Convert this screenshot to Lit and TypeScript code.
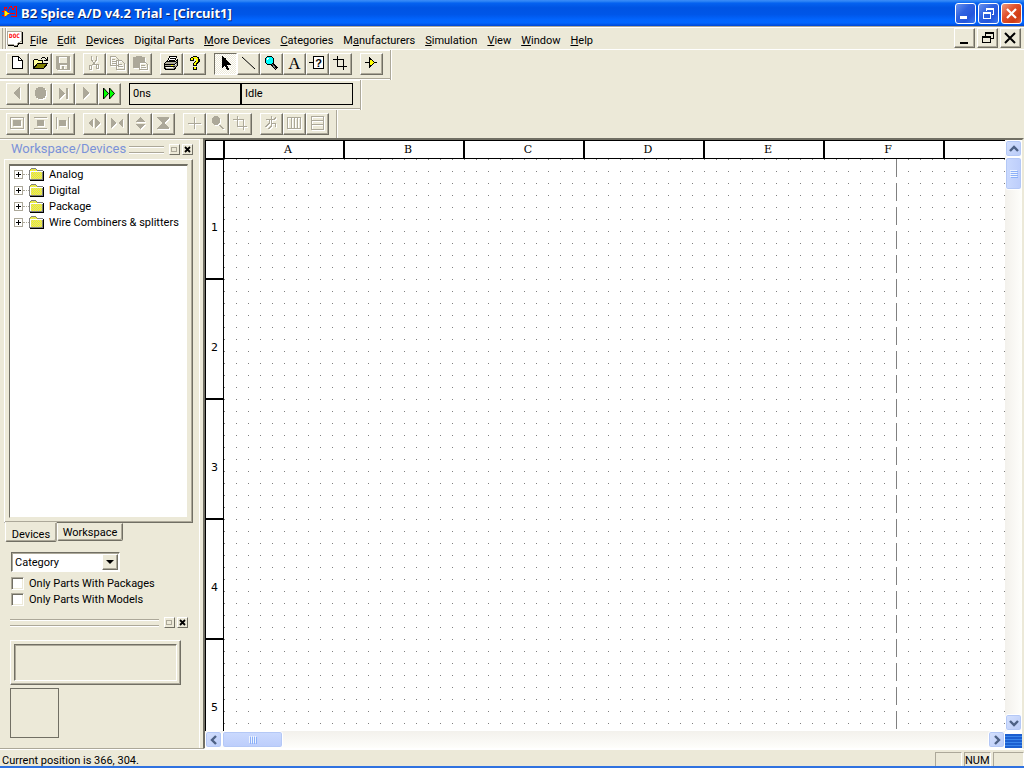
import { LitElement, html, svg, css, TemplateResult, SVGTemplateResult } from "lit";
import { customElement, property, state } from "lit/decorators.js";

type Art = SVGTemplateResult;

// A disabled glyph is engraved: a white copy one pixel down-right, then the grey one.
const engraved = (line: string, fill = ""): Art => svg`
  <g transform="translate(1 1)"><path d=${line} fill="none" stroke="#fff"/><path d=${fill} fill="#fff"/></g>
  <path d=${line} fill="none" stroke="#aca899"/><path d=${fill} fill="#aca899"/>`;

const crop = "M5.5 1v10.500h9M1 4.500h10.500V15";

const ICONS: Record<string, Art> = {
  new: svg`<path d="M3.500 1.500h6l4 4v8h-10z" fill="#fff" stroke="#000"/><path d="M9.500 2v3.500h4" fill="none" stroke="#000"/>`,
  open: svg`<path d="M1.500 13V5.500l1-1h3l1 1h4v3h-5z" fill="#ff9" stroke="#000"/>
    <path d="M1.500 13.500l4-5h10l-4 5z" fill="#808000" stroke="#000"/>
    <path d="M9 3h1V2h3v1h1v1h1V2h1v4h-4V5h2V4h-1V3h-3v1H9z" fill="#000"/>`,
  save: engraved("", "M1 1h14v14H2L1 14zM4 2v6h8V2zM5 10v4h2v-3h2v3h3v-4z"),
  cut: engraved("M5.500 1v4l4 5M10.500 1v4l-4 5M3.500 10.500h2v4h-2zM10.500 9.500h2v4h-2z"),
  copy: engraved("M1.500 1.500h5l3 3v6h-8zM3 4.500h3M3 6.500h5M3 8.500h5M7.500 5.500h5l3 3v6h-8zM9 9.500h4M9 11.500h5"),
  paste: engraved("M7.500 7.500h6l2 2v5h-8zM9 10.500h4M9 12.500h5", "M1 2h3V1h6v1h3v5H7v6H1z"),
  print: svg`<path d="M4.500 6.500l2-5h7l-2 5z" fill="#fff" stroke="#000"/><path d="M7 3.500h5M6 5.500h5" stroke="#000"/>
    <path d="M1.500 8.500l2-2h9l2-2v6l-3 3.500h-9l-1-1z" fill="#aca899" stroke="#000"/>
    <path d="M1.500 9.500h10l3-3M2 11.500h10" fill="none" stroke="#000"/><path d="M3 12.500h7" stroke="#fff"/><path d="M8 10.500h2" stroke="#ff0"/><path d="M12 9.500h1" stroke="#fff"/>`,
  help: svg`<path d="M4 6V3h1V2h2V1h4v1h2v2h1v3h-1v1h-1v1h-1v2H7V8h1V7h1V6h1V4H8v2z" fill="#000"/>
    <path d="M5 5V3h2V2h4v1h1v4h-1v1h-1v2H8V8h1V7h1V4H8V3H7v2z" fill="#ff0"/><path d="M7 12h4v3H7z"/><path d="M8 12h2v2H8z" fill="#ff0"/>`,
  select: svg`<path d="M5 1v12h1v-1h1v-1h1v1h1v2h1v1h2v-2h-1v-2h-1v-1h4V9h-1V8h-1V7h-1V6h-1V5h-1V4H9V3H7V2H6V1z"/>`,
  wire: svg`<path d="M2 2l13 12" stroke="#000" shape-rendering="auto"/>`,
  zoom: svg`<path d="M9 9l5 5" stroke="#000" stroke-width="3"/><path d="M9 9l4 5" stroke="#808080"/>
    <path d="M4.500 1.500h4l2 2v4l-2 2h-4l-2-2v-4z" fill="#0ff" stroke="#000"/><path d="M4 3.500h2M4.500 3v2" stroke="#fff"/>`,
  text: svg`<text x="8.500" y="14" text-anchor="middle" font-family="Liberation Serif, serif" font-size="17">A</text>`,
  part: svg`<path d="M4.500 1.500h10v12h-10zM0 7.500h4" fill="#fff" stroke="#000"/><text x="9.500" y="12" text-anchor="middle" font-family="Liberation Sans, sans-serif" font-weight="bold" font-size="11">?</text>`,
  crop: svg`<path d=${crop} fill="none" stroke="#000"/>`,
  gate: svg`<path d="M2 7.500h12" stroke="#000"/><path d="M6.500 3v9l5-4.500z" fill="#ff0" stroke="#000"/>`,
  back: engraved("", "M11 2v12L4 8z"),
  stop: engraved("", "M6 2h5v1h2v2h1v6h-1v2h-2v1H6v-1H4v-2H3V5h1V3h2z"),
  step: engraved("", "M4 3v11l6-5.500zM11 3h2v11h-2z"),
  play: engraved("", "M5 2v12l6-6z"),
  fast: svg`<path d="M2.500 3v11l5-5.500zM8.500 3v11l5-5.500z" fill="#0f0" stroke="#000" shape-rendering="auto"/>`,
  fitAll: engraved("M1.500 2.500h13v11h-13z", "M4 5h8v6H4z"),
  fitHeight: engraved("M2 2.500h13M2 13.500h13", "M5 5h7v6H5z"),
  fitWidth: engraved("M1.500 2v12M13.500 2v12", "M4 5h7v6H4z"),
  widen: engraved("", "M7 3v10L2 8zM9 3v10l5-5z"),
  narrow: engraved("", "M2 3v10l5-5zM14 3v10L9 8z"),
  taller: engraved("", "M3 7h10L8 2zM3 9h10l-5 5z"),
  shorter: engraved("", "M2 2h12v1L9 8l5 5v1H2v-1l5-5-5-5z"),
  cross: engraved("M8.500 2v12M2 8.500h13"),
  zoomOff: engraved("M10 10l4 4M11 10l4 4", "M5 1h4v1h1v1h1v5h-1v1H9v1H5V9H4V8H3V3h1V2h1z"),
  cropOff: engraved(crop),
  jump: engraved("M8.500 1v10l-3 3M3 4.500h8l2-2M6.500 5v3l-4 4M9 8.500h3v3"),
  columns: engraved("M1.500 2.500h13v11h-13zM5.500 2v12M8.500 2v12M11.500 2v12"),
  rows: engraved("M2.500 1.500h12v13h-12zM2 5.500h12M2 9.500h12"),
};

const icon = (name: string) => html`<svg width="16" height="16" viewBox="0 0 16 16" shape-rendering="crispEdges" aria-hidden="true">${ICONS[name]}</svg>`;

@customElement("tool-bar")
class ToolBar extends LitElement {
  @property({ attribute: false }) groups: string[][] = [];
  @property() pressed = "";
  @property() enabled = "";

  static styles = css`
    :host { display: flex; align-self: flex-start; flex: none; box-sizing: border-box; height: 30px; padding: 3px 7px 0 6px; gap: 8px;
      border-right: 1px solid #aca899; box-shadow: inset 0 -1px #fff, inset 0 -2px #aca899, inset 0 1px #fff, 1px 0 #fff; }
    :host(:last-child) { height: 28px; box-shadow: 1px 0 #fff; }
    .group { display: flex; }
    button { display: grid; place-items: start; width: 23px; height: 22px; padding: 1px 2px; margin: 0; background: #ece9d8; border: 1px solid;
      border-color: #fff #716f64 #716f64 #fff; box-shadow: inset -1px -1px #aca899; color: #000; }
    .down { border-color: #716f64 #fff #fff #716f64; box-shadow: none;
      background: repeating-conic-gradient(#fff 0 25%, #ece9d8 0 50%) 0 0 / 2px 2px; }
    svg { display: block; overflow: visible; }
  `;

  render() {
    const live = this.enabled.split(" ");
    return html`${this.groups.map((g) => html`<div class="group">${g.map((n) => html`
      <button class=${n === this.pressed ? "down" : ""} aria-label=${n} ?disabled=${!live.includes(n)}>${icon(n)}</button>`)}</div>`)}<slot></slot>`;
  }
}

@customElement("scroll-bar")
class ScrollBar extends LitElement {
  @property({ type: Boolean, reflect: true }) vertical = false;

  static styles = css`
    :host { display: flex; background: linear-gradient(#f3f1ec, #fefefb); min-width: 0; min-height: 0; height: 17px; }
    :host([vertical]) { flex-direction: column; width: 17px; height: auto; background: linear-gradient(90deg, #f3f1ec, #fefefb); }
    button, .thumb { box-sizing: border-box; display: grid; place-items: center; padding: 0; border: 1px solid #fff; border-radius: 3px;
      background: linear-gradient(135deg, #d5e1fe, #b9cbf8); box-shadow: inset 0 0 0 1px #b4c8f6; }
    button { width: 17px; height: 17px; flex: none; }
    .track { flex: 1; display: flex; }
    .thumb { width: 61px; height: 17px; background: linear-gradient(#cbdafe, #bccdfb); }
    :host([vertical]) .thumb { width: 17px; height: 33px; background: linear-gradient(90deg, #cbdafe, #bccdfb); }
    svg { display: block; }
  `;

  arrow(d: string) {
    return html`<button aria-label="Scroll"><svg width="10" height="10" viewBox="0 0 10 10"><path d=${d} fill="none" stroke="#4d6185" stroke-width="2.400"/></svg></button>`;
  }

  render() {
    const v = this.vertical;
    return html`${this.arrow(v ? "M1 7l4-4 4 4" : "M7 1L3 5l4 4")}
      <div class="track"><div class="thumb"><svg width="8" height="8" viewBox="0 0 8 8" shape-rendering="crispEdges">
        <path d=${v ? "M0 .5h7M0 2.500h7M0 4.500h7M0 6.500h7" : "M.5 0v7M2.500 0v7M4.500 0v7M6.500 0v7"} stroke="#eef4fe"/>
        <path d=${v ? "M1 1.500h7M1 3.500h7M1 5.500h7M1 7.500h7" : "M1.500 1v7M3.500 1v7M5.500 1v7M7.500 1v7"} stroke="#8cb0f8"/></svg></div></div>
      ${this.arrow(v ? "M1 3l4 4 4-4" : "M3 1l4 4-4 4")}`;
  }
}

@customElement("app-root")
class AppRoot extends LitElement {
  @state() tab = "Devices";

  static styles = css`
    :host { display: flex; flex-direction: column; height: 100vh; overflow: hidden; background: #ece9d8; color: #000;
      font: 11px/13px Roboto, "Liberation Sans", sans-serif; cursor: default; }
    * { box-sizing: border-box; }
    button, select, input { font: inherit; color: inherit; margin: 0; padding: 0; }
    svg { display: block; flex: none; }
    ul { list-style: none; margin: 0; padding: 0; }

    .title { display: flex; align-items: center; height: 26px; padding: 0 2px 0 1px; flex: none;
      background: linear-gradient(#3c8cf8 0, #2a82f5 5%, #0562f0 12%, #0054e3 30%, #0056e8 55%, #0264fd 75%, #0266ff 88%, #0046d2 100%); }
    h1 { flex: 1; margin: 0 0 0 3px; font: bold 13px/16px "Noto Sans", sans-serif; color: #fff; text-shadow: 1px 1px #0a246a; white-space: nowrap; }
    .win { display: flex; gap: 2px; }
    .win button { display: grid; place-items: center; width: 21px; height: 21px; border: 1px solid #fff; border-radius: 3px;
      background: linear-gradient(135deg, #6a92ee, #2f62e0 40%, #2456dc 70%, #3a78f0); }
    .win .close { background: linear-gradient(135deg, #eb9b80, #e2512c 40%, #cf3c14 75%, #e4603c); }

    .menu { display: flex; align-items: center; height: 24px; flex: none; padding: 0 3px 0 2px; border-top: 1px solid #aca899;
      box-shadow: inset 0 1px #fff, inset 0 -1px #fff; }
    .grip { width: 4px; height: 21px; border: solid; border-width: 0 1px; border-color: #fff #aca899; box-shadow: 1px 0 #fff; margin-right: 1px; }
    .menu ul { display: flex; flex: 1; gap: 10px; margin-left: 7px; padding-top: 4px; }
    .menu a { color: #000; text-decoration: none; white-space: nowrap; }
    .child { display: flex; gap: 2px; align-self: flex-end; padding-bottom: 2px; }
    .child button { display: grid; place-items: center; width: 21px; height: 20px; border: 1px solid; border-color: #fff #716f64 #716f64 #fff;
      background: #ece9d8; box-shadow: inset -1px -1px #aca899; }

    .bars { display: flex; flex-direction: column; flex: none; }
    .readout { display: flex; width: 224px; height: 22px; }
    .readout output { flex: 1; border: 1px solid #000; padding: 3px 3px 0; }

    .body { flex: 1; display: flex; min-height: 0; }
    .side { width: 203px; flex: none; padding: 3px 10px 0 4px; border-top: 1px solid #aca899; border-bottom: 1px solid #aca899;
      box-shadow: inset -3px 0 #ece9d8, inset -4px 0 #fff, inset 0 1px #fff; }
    .head { display: flex; align-items: center; gap: 2px; height: 14px; padding-left: 7px; }
    .head h2 { margin: 0 1px 0 0; font: 13px/14px Roboto, sans-serif; color: #7b92d8; }
    .lines { flex: 1; height: 7px; margin-right: 3px; border: solid #aca899; border-width: 1px 0; box-shadow: inset 0 1px #fff, 0 1px #fff; }
    .mini { display: grid; place-items: center; width: 11px; height: 11px; border: 1px solid; border-color: #fff #716f64 #716f64 #fff; background: #ece9d8; }
    .sheet { height: 364px; margin-top: 3px; padding: 4px; border: 1px solid; border-color: #fff #716f64 #716f64 #fff; box-shadow: inset -1px -1px #aca899; }
    .tree { height: 354px; background: #fff; border: solid; border-width: 2px 1px 1px; border-color: #716f64 #ece9d8 #ece9d8 #716f64; padding-left: 4px; }
    .tree li { display: flex; align-items: center; height: 16px; white-space: nowrap; }
    .expand { width: 9px; height: 9px; border: 1px solid #aca899; background: #fff; display: grid; place-items: center; }
    .stem { width: 6px; border-top: 1px dotted #aca899; }
    .tree span { margin-left: 5px; }
    .tabs { display: flex; align-items: flex-start; padding-left: 1px; }
    .tabs button { border: 1px solid; border-color: transparent #716f64 #716f64 #fff; border-radius: 0 0 2px 2px; background: #ece9d8;
      box-shadow: inset -1px -1px #aca899; height: 18px; width: 66px; }
    .tabs .on { width: 52px; height: 20px; padding-top: 4px; margin-top: -1px; border-right-color: #aca899; }
    .filter { padding: 10px 0 0 7px; }
    .pick { display: flex; width: 109px; height: 20px; background: #fff; border: 1px solid; border-color: #716f64 #fff #fff #716f64;
      box-shadow: inset 1px 1px #aca899; padding: 1px; position: relative; }
    .pick select { flex: 1; appearance: none; border: 0; background: transparent; padding: 0 2px; outline: 0; }
    .drop { position: absolute; right: 1px; top: 1px; width: 16px; height: 16px; display: grid; place-items: center; pointer-events: none;
      background: #ece9d8; border: 1px solid; border-color: #fff #716f64 #716f64 #fff; box-shadow: inset -1px -1px #aca899; }
    .check { display: flex; align-items: center; gap: 5px; height: 16px; white-space: nowrap; }
    .pick + .check { margin-top: 3px; }
    .check input { appearance: none; width: 13px; height: 13px; background: #fff; border: 1px solid; border-color: #aca899 #fff #fff #aca899;
      box-shadow: inset 1px 1px #716f64, inset -1px -1px #ece9d8; }
    .second { margin: 8px 5px 0 6px; padding: 0; }
    .frame { width: 171px; height: 45px; margin: 11px 0 0 6px; padding: 3px; border: 1px solid; border-color: #fff #716f64 #716f64 #fff;
      box-shadow: inset -1px -1px #aca899; }
    .frame div { height: 37px; border: 1px solid; border-color: #716f64 #fff #fff #716f64; box-shadow: inset 1px 1px #aca899; }
    .preview { width: 49px; height: 50px; margin: 3px 0 0 6px; border: 1px solid #716f64; }

    .view { flex: 1; min-width: 0; display: grid; grid-template: 19px 1fr 17px / 19px 1fr 17px; border: solid; border-width: 2px 2px 1px 2px;
      border-color: #716f64 #ece9d8 #fff #716f64; background: #fff; }
    .corner { border: 1px solid #000; }
    .cols { display: flex; border: solid #000; border-width: 1px 0 1px 2px; margin-left: -1px; overflow: hidden; min-width: 0; font: 11px/18px "DejaVu Serif", serif; }
    .cols div { width: 120px; flex: none; border-right: 2px solid #000; text-align: center; padding-left: 8px; }
    .rows { border: solid #000; border-width: 1px 1px 0; overflow: hidden; min-height: 0; font: 11px/14px "DejaVu Sans", sans-serif; }
    .rows div { height: 120px; border-bottom: 2px solid #000; display: flex; align-items: center; justify-content: center; padding-top: 18px; }
    .canvas { min-width: 0; min-height: 0; overflow: hidden; }
    .vert { grid-row: 1 / 3; grid-column: 3; }
    .horz { grid-column: 1 / 3; }
    .gripbox { background: repeating-linear-gradient(#1c5fd0 0 2px, #3b86ec 2px 3px); margin-top: 3px; }

    .status { display: flex; gap: 2px; height: 19px; flex: none; border-bottom: 2px solid #2f72e0; border-top: 1px solid #fff; }
    .status p { margin: 0; flex: 1; padding: 4px 2px 0; }
    .pane { width: 27px; margin-top: 2px; padding: 1px 0 0; border: solid; border-width: 1px 1px 0 1px; border-color: #aca899 #fff #fff #aca899; }
    .pane:last-child { width: 31px; }
  `;

  mini(art: TemplateResult, label: string) {
    return html`<button class="mini" aria-label=${label}>${art}</button>`;
  }

  miniPair() {
    return html`${this.mini(html`<svg width="9" height="9" viewBox="0 0 9 9" shape-rendering="crispEdges"><path d="M1.500 2.500h5v4h-5z" fill="none" stroke="#aca899"/></svg>`, "Dock")}
      ${this.mini(html`<svg width="9" height="9" viewBox="0 0 9 9"><path d="M2 2l5 5M7 2L2 7" stroke="#000" stroke-width="1.800"/></svg>`, "Close")}`;
  }

  render() {
    const menus = [["", "F", "ile"], ["", "E", "dit"], ["", "D", "evices"], ["Di", "g", "ital Parts"], ["", "M", "ore Devices"], ["", "C", "ategories"],
      ["M", "a", "nufacturers"], ["", "S", "imulation"], ["", "V", "iew"], ["", "W", "indow"], ["", "H", "elp"]];
    return html`
      <header class="title">
        <svg width="17" height="16" viewBox="0 0 17 16" shape-rendering="crispEdges"><path d="M3.500 5V2.500h2v1M7.500 6V4.500l2-3h1l1 3h1l1-3h2v9M10 11.500h6" fill="none" stroke="#f00"/>
          <path d="M1 6.500h4M1 10.500h4M8 8.500h6" stroke="#f00"/><path d="M3 5l6 3.500L3 12z" fill="#ff0" stroke="#f00" stroke-width=".5"/></svg>
        <h1>B2 Spice A/D v4.2 Trial - [Circuit1]</h1>
        <div class="win">
          <button aria-label="Minimize"><svg width="15" height="15"><path d="M2 10h7v3H2z" fill="#fff"/></svg></button>
          <button aria-label="Restore"><svg width="15" height="15" shape-rendering="crispEdges"><path d="M5 2h8v7h-2V8h1V4H6v1H5zM2 6h8v7H2zM3 8v4h6V8z" fill="#fff" fill-rule="evenodd"/></svg></button>
          <button class="close" aria-label="Close"><svg width="15" height="15"><path d="M3 3l9 9M12 3l-9 9" stroke="#fff" stroke-width="2.200"/></svg></button>
        </div>
      </header>
      <nav class="menu">
        <div class="grip"></div>
        <svg width="16" height="16" viewBox="0 0 16 16" shape-rendering="crispEdges"><path d="M.5 .5h14v10l-3 1-2 3h-2l-2-1H.5z" fill="#fff" stroke="#aca899"/>
          <path d="M1 14.500h5l2 1h2l2-3h3M15.500 1v12" fill="none" stroke="#000"/>
          <text x="7.500" y="7" text-anchor="middle" font-family="DejaVu Sans Mono, monospace" font-weight="bold" font-size="6" fill="#f00">DOC</text></svg>
        <ul>${menus.map(([a, k, b]) => html`<li><a href="#">${a}<u>${k}</u>${b}</a></li>`)}</ul>
        <div class="child">
          <button aria-label="Minimize document"><svg width="15" height="14"><path d="M3 11h8v2H3z"/></svg></button>
          <button aria-label="Restore document"><svg width="15" height="14" shape-rendering="crispEdges"><path d="M5 1h9v7h-3V7h2V3H6v2H5zM2 5h9v7H2zM3 7v4h7V7z" fill-rule="evenodd"/></svg></button>
          <button aria-label="Close document"><svg width="15" height="14"><path d="M2 2l10 10M12 2L2 12" stroke="#000" stroke-width="2"/></svg></button>
        </div>
      </nav>
      <div class="bars">
        <tool-bar pressed="select" enabled="new open print help select wire zoom text part crop gate"
          .groups=${[["new", "open", "save"], ["cut", "copy", "paste"], ["print", "help"], ["select", "wire", "zoom", "text", "part", "crop"], ["gate"]]}></tool-bar>
        <tool-bar enabled="fast" .groups=${[["back", "stop", "step", "play", "fast"]]}><div class="readout"><output>0ns</output><output>Idle</output></div></tool-bar>
        <tool-bar .groups=${[["fitAll", "fitHeight", "fitWidth"], ["widen", "narrow", "taller", "shorter"], ["cross", "zoomOff", "cropOff"], ["jump", "columns", "rows"]]}></tool-bar>
      </div>
      <main class="body">
        <aside class="side">
          <div class="head"><h2>Workspace/Devices</h2><div class="lines"></div>${this.miniPair()}</div>
          <div class="sheet"><ul class="tree">${["Analog", "Digital", "Package", "Wire Combiners & splitters"].map((t) => html`<li>
            <button class="expand" aria-label="Expand ${t}"><svg width="7" height="7" shape-rendering="crispEdges"><path d="M1 3.500h5M3.500 1v5" stroke="#000"/></svg></button>
            <div class="stem"></div>
            <svg width="15" height="13" viewBox="0 0 15 13" shape-rendering="crispEdges">
              <defs><pattern id="weave" width="2" height="2" patternUnits="userSpaceOnUse"><path d="M0 0h2v2H0z" fill="#ff0"/><path d="M0 0h1v1H0zM1 1h1v1H1z" fill="#d0d0a0"/></pattern></defs>
              <path d="M.5 11.500v-9l2-2h4l2 2h5v9z" fill="url(#weave)" stroke="#808080"/>
              <path d="M1.500 11V3.500h12" fill="none" stroke="#fff"/><path d="M1 12.500h14M14.500 3v9" stroke="#000"/></svg>
            <span>${t}</span></li>`)}</ul></div>
          <div class="tabs" role="tablist">${["Devices", "Workspace"].map((t) => html`<button role="tab" class=${t === this.tab ? "on" : ""}
            aria-selected=${t === this.tab} @click=${() => (this.tab = t)}>${t}</button>`)}</div>
          <div class="filter">
            <div class="pick"><select aria-label="Category"><option>Category</option></select>
              <div class="drop"><svg width="8" height="4"><path d="M0 0h8L4 4z"/></svg></div></div>
            <label class="check"><input type="checkbox">Only Parts With Packages</label>
            <label class="check"><input type="checkbox">Only Parts With Models</label>
          </div>
          <div class="head second"><div class="lines"></div>${this.miniPair()}</div>
          <div class="frame"><div></div></div>
          <div class="preview"></div>
        </aside>
        <section class="view">
          <div class="corner"></div>
          <div class="cols">${["A", "B", "C", "D", "E", "F"].map((c) => html`<div>${c}</div>`)}</div>
          <scroll-bar class="vert" vertical></scroll-bar>
          <div class="rows">${[1, 2, 3, 4, 5].map((n) => html`<div>${n}</div>`)}</div>
          <div class="canvas"><svg width="100%" height="100%" shape-rendering="crispEdges">
            <defs><pattern id="dots" width="12" height="12" patternUnits="userSpaceOnUse"><rect width="1" height="1" fill="#808080"/></pattern></defs>
            <rect width="100%" height="100%" fill="url(#dots)"/>
            <line x1="672.500" x2="672.500" y1="0" y2="100%" stroke="#808080" stroke-dasharray="18 6"/></svg></div>
          <scroll-bar class="horz"></scroll-bar>
          <div class="gripbox"></div>
        </section>
      </main>
      <footer class="status"><p>Current position is 366, 304.</p><div class="pane"></div><div class="pane">NUM</div><div class="pane"></div></footer>`;
  }
}
